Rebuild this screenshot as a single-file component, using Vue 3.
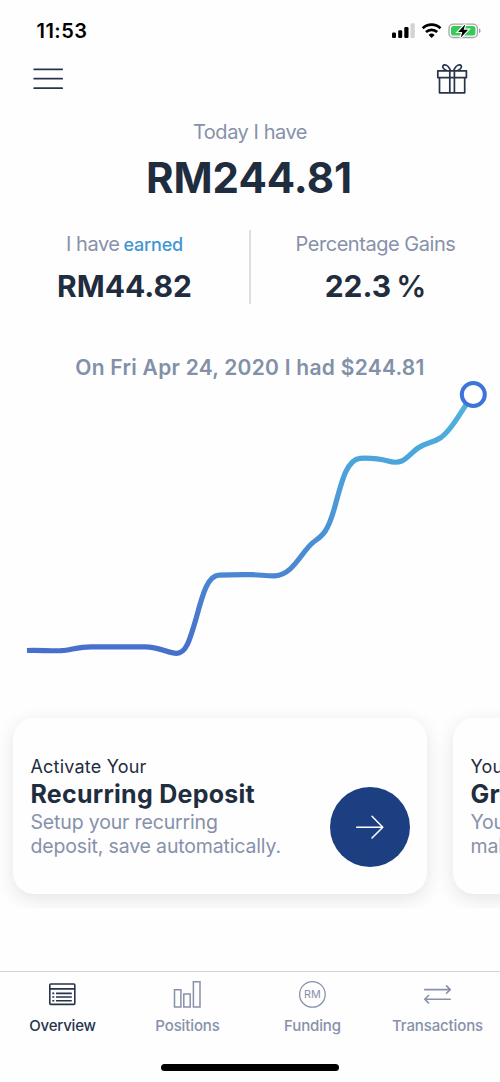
<script setup>
const cards = [
  { lead: 'Activate Your', title: 'Recurring Deposit', lines: ['Setup your recurring', 'deposit, save automatically.'] },
  { lead: 'Your Portfolio', title: 'Growth', lines: ['Your money is', 'making progress.'] },
]
</script>

<template>
  <div class="screen">
    <header class="status">
      <span class="time">11:53</span>
      <svg class="status-icons" width="92" height="20" viewBox="390 20 92 20">
        <rect x="392" y="32.5" width="4" height="5.5" rx="1.2" />
        <rect x="398.200" y="30.200" width="4" height="7.800" rx="1.2" />
        <rect x="404.300" y="27" width="4.200" height="11" rx="1.2" />
        <rect x="410.500" y="23.300" width="4.200" height="14.700" rx="1.2" fill="#d2d2d2" />
        <g fill="none" stroke="#000" stroke-width="2.700">
          <path d="M422.700 28.200A13 13 0 0 1 440.500 28.200" />
          <path d="M426 32A8.300 8.300 0 0 1 437.200 32" />
        </g>
        <path d="M431.600 38l-3-3.100a4.400 4.400 0 0 1 6 0z" />
        <rect x="449" y="24.100" width="28.400" height="13.400" rx="4.300" fill="#fff" stroke="#a5a5a5" stroke-width="1.300" />
        <rect x="451" y="26" width="24.400" height="9.600" rx="2.600" fill="#35cb5b" />
        <path d="M479 28.500c2 .7 2 3.800 0 4.600z" fill="#999" />
        <path d="M465.300 24.200l-7.200 7.700h4.200l-1.600 5.800 7.400-8h-4.400z" stroke="#fff" stroke-width="2.400" paint-order="stroke" />
      </svg>
    </header>

    <nav class="topbar">
      <svg width="30" height="24" viewBox="33 67 30 24" fill="none" stroke="#2b344d" stroke-width="1.800" stroke-linecap="round">
        <path d="M34.200 69.300h28M34.200 78.700h28M34.200 88.200h28" />
      </svg>
      <svg width="32" height="32" viewBox="436 63 32 32" fill="none" stroke="#27344a" stroke-width="1.700" stroke-linejoin="round">
        <rect x="437.800" y="70.800" width="28.600" height="6.800" />
        <path d="M439.500 77.600v15.200h25.200V77.600M449.800 70.800v22M454.400 70.800v22" />
        <path d="M450.500 70.500c-1-2.800-3.500-5.700-5.800-5.700-1.700 0-2.400 1.600-1.600 3 .6 1.100 1.800 1.900 3.400 2.700M453.700 70.500c1-2.800 3.500-5.700 5.800-5.700 1.700 0 2.400 1.600 1.600 3-.6 1.100-1.800 1.900-3.400 2.700" />
      </svg>
    </nav>

    <section class="balance">
      <p class="label today">Today I have</p>
      <p class="total">RM244.81</p>
    </section>

    <section class="stats">
      <div class="stat">
        <p class="label"><span>I have</span><span class="earned">earned</span></p>
        <p class="value">RM44.82</p>
      </div>
      <div class="stat">
        <p class="label">Percentage Gains</p>
        <p class="value">22.3<span class="percent">%</span></p>
      </div>
    </section>

    <p class="point">On Fri Apr 24, 2020 I had $244.81</p>

    <svg width="500" height="290" viewBox="0 380 500 290" fill="none">
      <defs>
        <linearGradient id="growth" gradientUnits="userSpaceOnUse" x1="0" y1="653" x2="0" y2="395">
          <stop offset="0" stop-color="#466fcc" />
          <stop offset="0.300" stop-color="#4b86d2" />
          <stop offset="0.750" stop-color="#4ba5db" />
          <stop offset="1" stop-color="#50b5dc" />
        </linearGradient>
      </defs>
      <path
        d="M27 650.500C38 650 50 651 61 650.700C71 650 78 646.800 91 646.800H145C160 646.800 168 653.300 176.500 653.300C186 653.300 189.500 641 196.500 617C203 593 208 575.500 219 575.200C232 574.500 242 574.600 252 574.700C260 574.800 267 576 275 575.800C293 575 302 551 313 542.500C322 535.500 327 534 334.500 508C342 480 347 459.500 360 458.300C372 457.800 379 458.500 388 461C404 466 408 455 418 448C427 442 433 443 441 437.500C451 430 459 415 473 394"
        stroke="url(#growth)" stroke-width="5.200"
      />
      <circle cx="473.300" cy="394.500" r="11.500" fill="#fff" stroke="#3c74dc" stroke-width="4" />
    </svg>

    <section class="carousel">
      <article v-for="card in cards" :key="card.title" class="card">
        <div class="copy">
          <p class="lead">{{ card.lead }}</p>
          <h2>{{ card.title }}</h2>
          <p v-for="line in card.lines" :key="line" class="line">{{ line }}</p>
        </div>
        <button class="go">
          <svg width="30" height="26" viewBox="0 0 30 26" fill="none" stroke="#fff" stroke-width="1.500" stroke-linecap="round" stroke-linejoin="round">
            <path d="M1.700 13.200h26M17 2.200L27.800 13.200 17 24" />
          </svg>
        </button>
      </article>
    </section>

    <footer class="tabs">
      <div class="tab active">
        <svg width="31" height="30" viewBox="47 980 31 30" fill="none" stroke="currentColor" stroke-width="1.600">
          <rect x="49.800" y="984" width="25" height="20.400" rx="1" />
          <path d="M49.800 988.900h25M56 993.400h15.800M56 997h15.800M56 1000.700h15.800M52.300 993.400h2M52.300 997h2M52.300 1000.700h2" />
        </svg>
        <span class="tight">Overview</span>
      </div>
      <div class="tab">
        <svg width="31" height="30" viewBox="172 980 31 30" fill="none" stroke="currentColor" stroke-width="1.500">
          <path d="M174.500 989.800h6.400v17.200h-6.400zM183.800 994h6.400v13h-6.400zM193.400 981.800h6.600V1007h-6.600z" />
        </svg>
        <span>Positions</span>
      </div>
      <div class="tab">
        <svg width="31" height="30" viewBox="297 980 31 30">
          <circle cx="312.400" cy="994.400" r="12.800" fill="none" stroke="currentColor" stroke-width="1.300" />
          <text x="312.300" y="998.200" text-anchor="middle" font-size="10.800" fill="currentColor">RM</text>
        </svg>
        <span>Funding</span>
      </div>
      <div class="tab">
        <svg width="31" height="30" viewBox="422 980 31 30" fill="none" stroke="currentColor" stroke-width="1.600" stroke-linecap="round" stroke-linejoin="round">
          <path d="M424.700 989.600h25.500M446.500 985.900l3.800 3.700-3.800 3.700M450.200 999.200h-25.500M428.500 995.500l-3.800 3.700 3.800 3.700" />
        </svg>
        <span>Transactions</span>
      </div>
    </footer>
    <div class="home"></div>
  </div>
</template>

<style>
body { background: #fefefe; }
</style>

<style scoped>
.screen {
  width: 500px;
  height: 1082px;
  overflow: hidden;
  display: flex;
  flex-direction: column;
  background: #fefefe;
  color: #1f2d3f;
  font-family: Inter, "Liberation Sans", sans-serif;
}
p, h2 { margin: 0; white-space: nowrap; }
svg { display: block; flex: none; }
.status {
  height: 60px;
  box-sizing: border-box;
  padding: 20px 18px 0 36.500px;
  display: flex;
  justify-content: space-between;
}
.time { color: #000; font-size: 20px; font-weight: 600; line-height: 22px; letter-spacing: 0.450px; }
.topbar {
  height: 60px;
  box-sizing: border-box;
  padding: 3px 32px 0 33px;
  display: flex;
  justify-content: space-between;
}
.topbar svg:first-child { margin-top: 4px; }
.balance { height: 110px; text-align: center; }
.label {
  height: 24px;
  display: flex;
  align-items: baseline;
  justify-content: center;
  color: #8791aa;
  font-size: 20px;
  line-height: 24px;
  letter-spacing: -0.460px;
}
.total { margin: 14px 2px 0 0; font-size: 42px; font-weight: 700; line-height: 40px; }
.stats { display: flex; height: 74px; }
.stat { width: 249px; text-align: center; }
.stat + .stat { border-left: 2px solid #dcdee1; }
.stat .label { margin-top: 2px; }
.earned { margin-left: 4px; color: #4296d3; font-size: 18px; font-weight: 500; letter-spacing: -0.200px; }
.value { margin-top: 18px; font-size: 30px; font-weight: 700; line-height: 24px; }
.percent { margin-left: 5px; font-weight: 600; }
.point {
  margin-top: 52px;
  height: 24px;
  color: #8290a8;
  font-size: 21px;
  font-weight: 600;
  line-height: 24px;
  letter-spacing: 0.260px;
  text-align: center;
}
.carousel {
  margin-top: 30px;
  height: 208px;
  box-sizing: border-box;
  padding: 18px 13px 0;
  display: flex;
  gap: 26px;
  overflow: hidden;
}
.card {
  flex: none;
  width: 414px;
  height: 176px;
  box-sizing: border-box;
  padding: 38px 17px 0 17.500px;
  display: flex;
  justify-content: space-between;
  border-radius: 21px;
  background: #fefefe;
  box-shadow: 0 5px 18px rgba(32, 42, 58, 0.120);
}
.lead { font-size: 18px; line-height: 22px; letter-spacing: 0.200px; }
.card h2 { font-size: 25px; font-weight: 700; line-height: 32px; letter-spacing: 0.260px; }
.line { color: #8791aa; font-size: 19.500px; line-height: 24px; letter-spacing: -0.160px; }
.go {
  flex: none;
  width: 80px;
  height: 80px;
  margin: 31px 0 0;
  padding: 0;
  display: grid;
  place-items: center;
  border: 0;
  border-radius: 50%;
  background: #1c3f82;
}
.tabs {
  margin-top: 63px;
  height: 93px;
  box-sizing: border-box;
  flex: none;
  display: flex;
  border-top: 1px solid #d3d6d9;
}
.tab {
  width: 125px;
  padding-top: 8px;
  display: flex;
  flex-direction: column;
  align-items: center;
  color: #8791aa;
  font-size: 15px;
  font-weight: 500;
  line-height: 20px;
  letter-spacing: -0.130px;
}
.tab span { margin-top: 6px; }
.tab .tight { letter-spacing: -0.200px; }
.tab.active { color: #27334a; }
.tab text { font-family: Inter, "Liberation Sans", sans-serif; font-weight: 400; letter-spacing: 0; }
.home {
  flex: none;
  width: 178px;
  height: 7px;
  margin-left: 161px;
  border-radius: 4px;
  background: #000;
}
</style>
